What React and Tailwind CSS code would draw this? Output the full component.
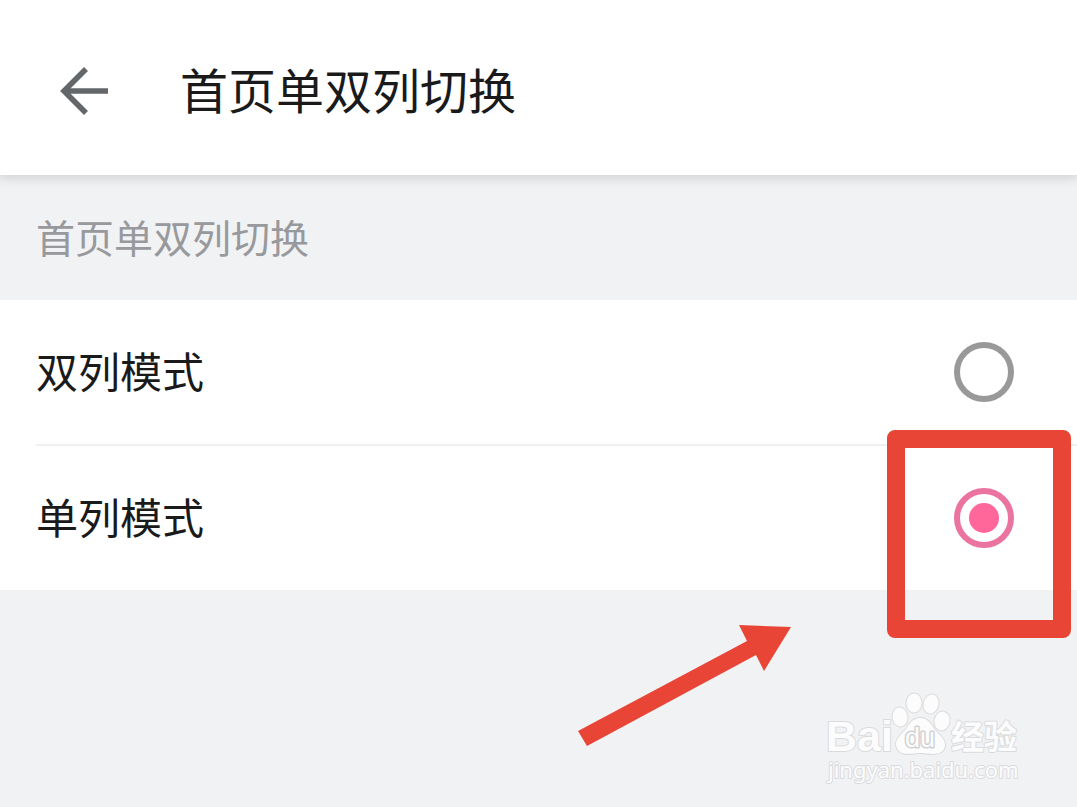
import { useState } from 'react'

const modes = [
  { value: 'double', label: '双列模式' },
  { value: 'single', label: '单列模式' }
]

function BackArrow() {
  return (
    <svg width="48" height="48" viewBox="0 0 48 48" fill="none" stroke="#63676a" strokeWidth="5.6" aria-hidden="true">
      <path d="M48 24H4" />
      <path d="M26 2L4 24L26 46" />
    </svg>
  )
}

function PointerArrow() {
  return (
    <svg width="214" height="122" viewBox="0 0 214 122" fill="#e84536" aria-hidden="true">
      <path d="M0 106L169 16L161 0L213 2L186 46L178 30L9 121Z" />
    </svg>
  )
}

function Watermark() {
  return (
    <svg
      width="204"
      height="96"
      viewBox="0 0 204 96"
      fill="#fcfcfd"
      stroke="#dadbdd"
      strokeWidth="2"
      paintOrder="stroke"
      strokeLinejoin="round"
      role="img"
      aria-label="Baidu 经验"
    >
      <text x="5" y="60" fontSize="43" fontWeight="700" className="font-['Liberation_Sans',sans-serif]">Bai</text>
      <ellipse cx="79" cy="26" rx="7.5" ry="9.5" transform="rotate(-8 79 26)" />
      <ellipse cx="93" cy="12" rx="7.5" ry="9.5" />
      <ellipse cx="110" cy="13" rx="7.5" ry="9.5" transform="rotate(14 110 13)" />
      <ellipse cx="121" cy="30" rx="7.5" ry="9.5" transform="rotate(10 121 30)" />
      <path d="M99 27C107 27 110 33 114 39C118 44 124 47 124 54C124 60 119 63 113 63C107 63 104 62 99 62C94 62 91 63 86 63C80 63 75 59 75 53C75 47 81 43 85 38C89 32 92 27 99 27Z" />
      <text x="84" y="56" fontSize="27" stroke="#d0d1d3" strokeWidth="3" className="font-['Liberation_Sans',sans-serif]">du</text>
      <text x="130" y="58" fontSize="33" fontWeight="700" className="font-['Noto_Sans_CJK_SC',sans-serif]">经验</text>
      <text x="7" y="87" fontSize="22" className="font-['Noto_Sans',sans-serif]">jingyan.baidu.com</text>
    </svg>
  )
}

function App() {
  const [mode, setMode] = useState('single')

  return (
    <div className="relative flex flex-col min-h-screen bg-[#f1f2f4] text-[#1a1a1a] font-['Noto_Sans_CJK_SC',sans-serif]">
      {/* Title bar */}
      <header className="relative flex items-center gap-18 px-15 pt-[54px] pb-12 bg-white shadow-[0_0_12px_2px_rgba(0,0,0,0.16)]">
        <button type="button" aria-label="返回" className="cursor-pointer">
          <BackArrow />
        </button>
        <h1 className="pb-1 text-[48px] leading-[69px]">首页单双列切换</h1>
      </header>

      <main>
        <h2 id="mode-title" className="px-9 pt-[31px] pb-[33px] text-[39px] leading-[61px] text-[#98999c]">
          首页单双列切换
        </h2>

        {/* Mode options */}
        <div role="radiogroup" aria-labelledby="mode-title" className="bg-white">
          {modes.map((item, index) => (
            <div key={item.value} className="relative">
              {index > 0 && <div className="ml-9 h-[2px] bg-[#f0f0f1]" />}
              <label className="flex items-center justify-between h-36 pl-9 pr-[63px] cursor-pointer">
                <span className="pb-1 text-[42px] leading-[60px]">{item.label}</span>
                <input
                  type="radio"
                  name="mode"
                  value={item.value}
                  checked={mode === item.value}
                  onChange={() => setMode(item.value)}
                  className="appearance-none size-15 p-[9px] border-6 border-[#999999] rounded-full bg-clip-content checked:border-[#ea749f] checked:bg-[#ff6699]"
                />
              </label>
              {item.value === 'single' && (
                <>
                  <div className="absolute -top-[14px] right-[6px] w-46 h-52 border-18 border-[#e84536] rounded-lg pointer-events-none" />
                  <div className="absolute top-[181px] right-[285px] pointer-events-none">
                    <PointerArrow />
                  </div>
                </>
              )}
            </div>
          ))}
        </div>
      </main>

      <div className="absolute bottom-5 right-13 pointer-events-none">
        <Watermark />
      </div>
    </div>
  )
}

export default App
